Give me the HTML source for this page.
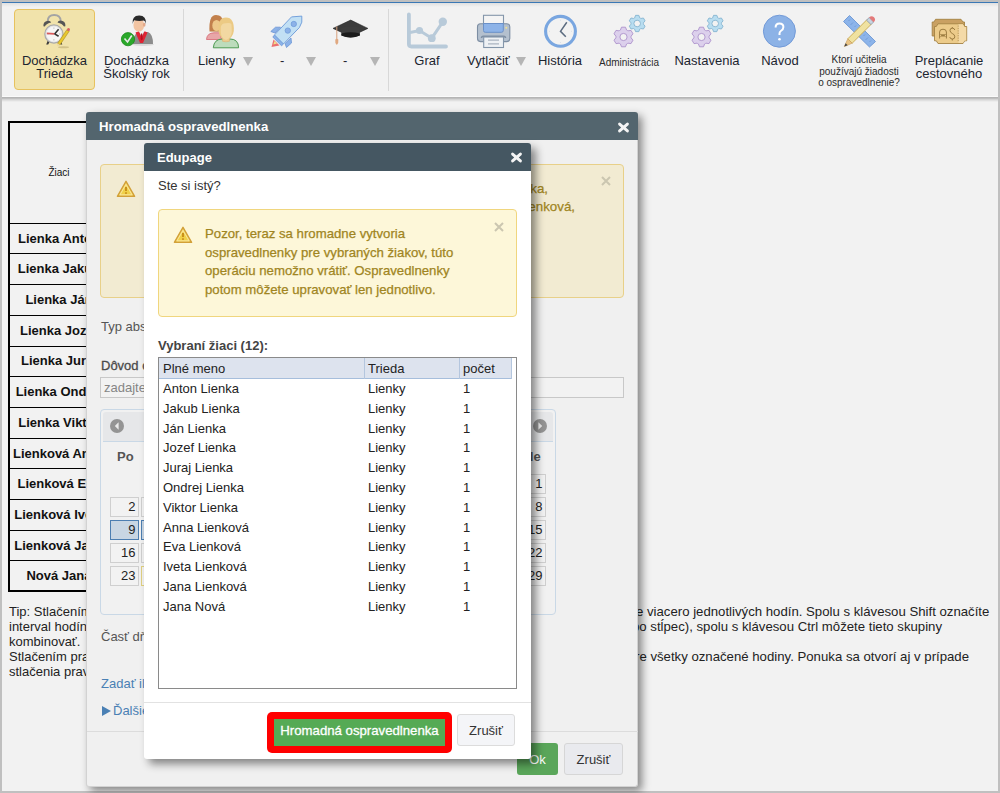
<!DOCTYPE html>
<html><head><meta charset="utf-8">
<style>
*{box-sizing:border-box}
html,body{margin:0;padding:0;width:1000px;height:793px;overflow:hidden;background:#c0c0c0;font-family:"Liberation Sans",sans-serif;font-size:13px;color:#222}
.a{position:absolute}
#page{position:absolute;left:2px;top:2px;width:996px;height:789px;background:#f2f2f2;overflow:hidden}
.sep{position:absolute;top:9px;width:1px;height:82px;background:#d8d8d8}
.lbl{position:absolute;text-align:center;white-space:nowrap;line-height:12.5px;color:#1c2530}
.arr{position:absolute;width:0;height:0;border-left:5px solid transparent;border-right:5px solid transparent;border-top:9px solid #b5b5b5}
.t{position:absolute;white-space:nowrap}
.row{position:absolute;left:10px;width:400px;height:1px;background:#000}
.nm{position:absolute;left:10px;width:98px;text-align:center;font-weight:bold;white-space:nowrap;line-height:16px;color:#111}
.cell{position:absolute;width:29px;height:20px;border:1px solid #cfcfcf;background:#f2f2f2;text-align:right;padding-right:2.5px;line-height:18px;font-size:13px;color:#222}
.lr{position:absolute;white-space:nowrap;line-height:16px;color:#222}
</style></head><body>
<div id="page"></div>
<!-- toolbar -->
<div class="a" style="left:2px;top:2px;width:996px;height:1px;background:#3b78b5"></div>
<div class="a" style="left:2px;top:96px;width:996px;height:1px;background:#fafafa"></div>
<div class="a" style="left:2px;top:97px;width:996px;height:5px;background:linear-gradient(#b2b2b2 0px,#bababa 1.2px,#d4d4d4 2.5px,#f2f2f2 5px)"></div>
<div class="a" style="left:2px;top:3px;width:996px;height:4px;background:linear-gradient(#e0e0e0,#f2f2f2)"></div>
<div class="a" style="left:14px;top:9px;width:81px;height:81px;background:#f1e3ab;border:1px solid #e7c25e;border-radius:4px"></div>
<div class="lbl" style="left:14px;top:55px;width:81px">Dochádzka<br>Trieda</div>
<div class="lbl" style="left:95.5px;top:55px;width:82px">Dochádzka<br>Školský rok</div>
<div class="sep" style="left:183px"></div>
<div class="lbl" style="left:198px;top:55px">Lienky</div>
<div class="arr" style="left:243px;top:57px"></div>
<div class="lbl" style="left:280px;top:55px">-</div>
<div class="arr" style="left:306px;top:57px"></div>
<div class="lbl" style="left:343px;top:55px">-</div>
<div class="arr" style="left:370px;top:57px"></div>
<div class="sep" style="left:388px"></div>
<div class="lbl" style="left:405px;top:55px;width:44px">Graf</div>
<div class="lbl" style="left:467px;top:55px">Vytlačiť</div>
<div class="arr" style="left:516px;top:57px"></div>
<div class="lbl" style="left:530px;top:55px;width:60px">História</div>
<div class="lbl" style="left:594px;top:57px;width:70px;font-size:10px;color:#2a2a2a">Administrácia</div>
<div class="lbl" style="left:667px;top:55px;width:80px">Nastavenia</div>
<div class="lbl" style="left:752px;top:55px;width:56px">Návod</div>
<div class="lbl" style="left:811px;top:54px;width:96px;font-size:10px;line-height:11.5px;color:#2a2a2a">Ktorí učitelia<br>používajú žiadosti<br>o ospravedlnenie?</div>
<div class="lbl" style="left:905px;top:55px;width:88px">Preplácanie<br>cestovného</div>

<!-- icons -->
<svg class="a" style="left:40px;top:12px" width="32" height="38" viewBox="0 0 32 38">
 <ellipse cx="23.5" cy="35.2" rx="5.5" ry="1" fill="#b8a870" opacity=".55"/>
 <path d="M7.7,9 Q8,3 14.2,3 Q20.4,3 20.8,9" fill="none" stroke="#a4a4a4" stroke-width="1.8"/>
 <path d="M3.4,14.2 Q3,9.2 8.5,8.8 Q10.5,9 11.2,10.6 Q6.5,11.5 4.8,14.5Z" fill="#555"/>
 <path d="M25.4,14.2 Q25.8,9 20.3,8.6 Q18.2,8.8 17.5,10.4 Q22.3,11.4 24,14.5Z" fill="#555"/>
 <path d="M7.8,28.5 L6.2,32.4 L8.2,32.6 L9.8,29.5Z" fill="#3a3a3a"/>
 <path d="M20.5,28.5 L22.3,32.4 L20.6,32.6 L18.7,29.5Z" fill="#3a3a3a"/>
 <circle cx="13.9" cy="22" r="9.1" fill="#e4e4e4" stroke="#aaa" stroke-width="1.2"/>
 <circle cx="13.9" cy="22" r="7.4" fill="#f6f6f6"/>
 <path d="M13.9,15.6 v1 M13.9,27.4 v1 M7.5,22 h1 M19.3,22 h1" stroke="#999" stroke-width=".8"/>
 <path d="M6.8,21.4 L14.5,21.8" stroke="#d85a5a" stroke-width="1.7"/>
 <path d="M14.6,21.9 L18.6,17.2 M14.6,21.9 L18.6,24.3" stroke="#333" stroke-width="1.6"/>
 <path d="M19.92,32.93 L29.16,19.29 L26.84,17.72 L17.6,31.36Z" fill="#e8c82e" stroke="#a88a1e" stroke-width=".6"/>
 <path d="M19.92,32.93 L17.6,31.36 L17.3,34.3Z" fill="#e8d4a0"/>
 <circle cx="28.5" cy="17.6" r="1.5" fill="#d86262"/>
</svg>
<svg class="a" style="left:118px;top:12px" width="40" height="36" viewBox="0 0 40 36">
 <ellipse cx="25" cy="32.5" rx="11" ry="1.5" fill="#ccc" opacity=".6"/>
 <path d="M15,32 Q15,22.5 20,20 L30,20 Q35,22 35,32Z" fill="#8c8c8c"/>
 <path d="M17.5,20.5 L21,19.3 L23.5,25.5 L26.5,19.3 L29.5,20.5 L25,31 L22,31Z" fill="#e02434"/>
 <path d="M21,19.3 L23.5,24.5 L26.3,19.3Z" fill="#f4f4f4"/>
 <path d="M23,21.5 L24.2,21.5 L24.8,27 L23.6,28.5 L22.6,27Z" fill="#b81020"/>
 <ellipse cx="20.8" cy="13" rx="5.4" ry="6.6" fill="#f2c4a2"/>
 <ellipse cx="26.2" cy="12.8" rx="1.3" ry="2" fill="#e2a88a"/>
 <path d="M14.6,12 Q13.8,3.5 21,3.5 Q28.5,3.3 28,12 Q27.2,9 25.8,8.6 Q20.5,9.6 16.2,8.2 Q15.2,9.5 14.6,12Z" fill="#2a2a2a"/>
 <circle cx="10" cy="27.2" r="6.6" fill="#2aa82a" stroke="#1a8a1a" stroke-width=".8"/>
 <path d="M6.5,26.5 L9.5,30 L13.8,23.5" fill="none" stroke="#e8e8e8" stroke-width="1.6"/>
</svg>
<svg class="a" style="left:200px;top:10px" width="50" height="42" viewBox="0 0 50 42">
 <path d="M6.5,29.5 Q7,23 14,22.8 L20,22.8 L21.5,29.5Z" fill="#e8a6a8" stroke="#d8707a" stroke-width=".9"/>
 <path d="M9.5,21.5 Q8.5,5 16,5 Q23,5 22.5,12 L21,21.7Z" fill="#c2804c"/>
 <ellipse cx="16.5" cy="15.5" rx="4.2" ry="5.5" fill="#eec88a"/>
 <path d="M13.3,37.8 Q14,29 22.5,29 L30,29 Q38.5,29 38.6,37.8Z" fill="#bcdcbc" stroke="#4e9a52" stroke-width="1"/>
 <path d="M22.5,27 L22.5,31.2 Q26,32.5 29.5,31.2 L29.5,27Z" fill="#eccc90" stroke="#d8b070" stroke-width=".6"/>
 <path d="M18.5,21 Q17.5,7.5 26,7.5 Q34.5,7.5 33.8,21 Q33,28 26,30.5 Q19.5,28 18.5,21Z" fill="#ecca84"/>
 <path d="M20.8,17 Q21.5,13 26,13.2 Q30.5,12.5 31.5,14.5 L31.8,22 Q31,28.5 26,30 Q21,28.5 20.8,22Z" fill="#f2d8a2"/>
</svg>
<svg class="a" style="left:265px;top:10px" width="45" height="42" viewBox="0 0 45 42">
 <path d="M6.5,37 L8.5,29.5 L14.5,35.5Z" fill="#ea7070"/>
 <path d="M8.3,34.5 L9.5,31 L12,33.5Z" fill="#f0e08a"/>
 <path d="M5.8,21.5 L10.5,17.2 L15.5,17.2 L10,23Z" fill="#8cb2e8" stroke="#6a94d4" stroke-width=".8"/>
 <path d="M20,33.5 L26,28 L26.5,33 L21.5,37.5Z" fill="#8cb2e8" stroke="#6a94d4" stroke-width=".8"/>
 <path d="M9.5,25 L18.5,34 L16.5,35.8 L7.8,27Z" fill="#8cb2e8" stroke="#6a94d4" stroke-width=".8"/>
 <path d="M26.5,6.9 L36.8,6.1 L36.8,12.2 L34.4,17.5 L18.5,33.9 L9.5,24.9Z" fill="#c2e0f4" stroke="#6a98d8" stroke-width=".9"/>
 <circle cx="28.8" cy="14" r="2.7" fill="#8cb2e8" stroke="#6a98d8" stroke-width=".7"/>
 <circle cx="22.8" cy="20.6" r="2.7" fill="#8cb2e8" stroke="#6a98d8" stroke-width=".7"/>
</svg>
<svg class="a" style="left:328px;top:12px" width="44" height="40" viewBox="0 0 44 40">
 <path d="M5,16.4 L22.7,8.1 L39.9,16.4 L22.7,24.5Z" fill="#3c3c3c" stroke="#222" stroke-width=".6"/>
 <path d="M13.4,15.5 Q22.6,13.5 31.8,15.5 L31.8,23.5 Q22.6,27.5 13.4,23.5Z" fill="#3e3e3e"/>
 <path d="M13.4,21.5 Q22.6,19 31.8,21.5 L31.8,23.5 Q22.6,27.5 13.4,23.5Z" fill="#1c1c1c"/>
 <path d="M8.8,14.5 L8.8,27" stroke="#d8a27e" stroke-width="1"/>
 <path d="M7.3,27.5 Q8.8,26 10.3,27.5 L10.2,31 L8.8,33 L7.4,31Z" fill="#e0a880"/>
</svg>
<svg class="a" style="left:403px;top:10px" width="48" height="42" viewBox="0 0 48 42">
 <path d="M5.9,4.5 L5.9,34 Q5.9,36.5 8.5,36.5 L43,36.5" fill="none" stroke="#b8cad9" stroke-width="3.8" stroke-linecap="round"/>
 <path d="M7,22.5 L16.5,20.5 L28.8,28.2 L39.8,11.8" fill="none" stroke="#b8cad9" stroke-width="3"/>
 <circle cx="16.5" cy="20.5" r="3.6" fill="#b8cad9"/>
 <circle cx="28.8" cy="28.2" r="3.9" fill="#b8cad9"/>
 <circle cx="39.8" cy="11.8" r="4.2" fill="#b8cad9"/>
</svg>
<svg class="a" style="left:472px;top:10px" width="44" height="42" viewBox="0 0 44 42">
 <rect x="11.5" y="5.3" width="20" height="9" fill="#f4f4f4" stroke="#8496aa" stroke-width="1.1"/>
 <rect x="5.5" y="13.8" width="32.3" height="17.8" rx="3" fill="#b4c0ce" stroke="#7d8ea3" stroke-width="1.1"/>
 <path d="M11.5,13.5 L31.3,13.5 L31.3,20.5 Q31.3,22.3 29.5,22.3 L13.3,22.3 Q11.5,22.3 11.5,20.5Z" fill="#8db3e8" stroke="#6a90c8" stroke-width="1"/>
 <circle cx="34.3" cy="17.8" r="1" fill="#f0e090"/>
 <path d="M9.5,28 Q9.5,26.2 11.5,26.2 L31.5,26.2 Q33.5,26.2 33.5,28" fill="none" stroke="#7d8ea3" stroke-width="1.5"/>
 <rect x="11.7" y="27" width="19.8" height="10.5" fill="#eef1f4" stroke="#8496aa" stroke-width="1.1"/>
 <path d="M16,30.2 L27,30.2 M16,33.8 L27,33.8" stroke="#aab4c0" stroke-width="1.2"/>
</svg>
<svg class="a" style="left:538px;top:10px" width="44" height="42" viewBox="0 0 44 42">
 <circle cx="22.5" cy="21.3" r="14.9" fill="#f2f2f2" stroke="#79a6e0" stroke-width="3.1"/>
 <path d="M28.8,12.3 L22.5,21.3 L27.8,26.8" fill="none" stroke="#5c6c80" stroke-width="1.5"/>
 <path d="M22.5,9.8 v.8 M22.5,32 v.8 M11,21.3 h.8 M33.2,21.3 h.8" stroke="#d4dce8" stroke-width="1"/>
</svg>
<svg class="a" style="left:605px;top:10px" width="45" height="42" viewBox="0 0 45 42">
 <path fill-rule="evenodd" fill="#b8ddf0" stroke="#86b4d0" stroke-width=".9" d="M29.67,7.84 L30.55,5.37 L33.85,5.37 L34.73,7.84 L35.30,8.13 L35.84,8.48 L38.42,8.00 L40.07,10.86 L38.37,12.86 L38.40,13.50 L38.37,14.14 L40.07,16.14 L38.42,19.00 L35.84,18.52 L35.30,18.87 L34.73,19.16 L33.85,21.63 L30.55,21.63 L29.67,19.16 L29.10,18.87 L28.56,18.52 L25.98,19.00 L24.33,16.14 L26.03,14.14 L26.00,13.50 L26.03,12.86 L24.33,10.86 L25.98,8.00 L28.56,8.48 L29.10,8.13Z M35.50,13.50 A3.3,3.3 0 1 0 28.90,13.50 A3.3,3.3 0 1 0 35.50,13.50Z"/>
 <path fill-rule="evenodd" fill="#dcd0ec" stroke="#ad92cc" stroke-width=".9" d="M15.40,20.06 L16.51,17.20 L20.49,17.20 L21.60,20.06 L22.30,20.42 L22.96,20.85 L25.99,20.38 L27.98,23.82 L26.06,26.21 L26.10,27.00 L26.06,27.79 L27.98,30.18 L25.99,33.62 L22.96,33.15 L22.30,33.58 L21.60,33.94 L20.49,36.80 L16.51,36.80 L15.40,33.94 L14.70,33.58 L14.04,33.15 L11.01,33.62 L9.02,30.18 L10.94,27.79 L10.90,27.00 L10.94,26.21 L9.02,23.82 L11.01,20.38 L14.04,20.85 L14.70,20.42Z M22.10,27.00 A3.6,3.6 0 1 0 14.90,27.00 A3.6,3.6 0 1 0 22.10,27.00Z"/>
</svg>
<svg class="a" style="left:683px;top:10px" width="45" height="42" viewBox="0 0 45 42">
 <path fill-rule="evenodd" fill="#b8ddf0" stroke="#86b4d0" stroke-width=".9" d="M29.67,7.84 L30.55,5.37 L33.85,5.37 L34.73,7.84 L35.30,8.13 L35.84,8.48 L38.42,8.00 L40.07,10.86 L38.37,12.86 L38.40,13.50 L38.37,14.14 L40.07,16.14 L38.42,19.00 L35.84,18.52 L35.30,18.87 L34.73,19.16 L33.85,21.63 L30.55,21.63 L29.67,19.16 L29.10,18.87 L28.56,18.52 L25.98,19.00 L24.33,16.14 L26.03,14.14 L26.00,13.50 L26.03,12.86 L24.33,10.86 L25.98,8.00 L28.56,8.48 L29.10,8.13Z M35.50,13.50 A3.3,3.3 0 1 0 28.90,13.50 A3.3,3.3 0 1 0 35.50,13.50Z"/>
 <path fill-rule="evenodd" fill="#dcd0ec" stroke="#ad92cc" stroke-width=".9" d="M15.40,20.06 L16.51,17.20 L20.49,17.20 L21.60,20.06 L22.30,20.42 L22.96,20.85 L25.99,20.38 L27.98,23.82 L26.06,26.21 L26.10,27.00 L26.06,27.79 L27.98,30.18 L25.99,33.62 L22.96,33.15 L22.30,33.58 L21.60,33.94 L20.49,36.80 L16.51,36.80 L15.40,33.94 L14.70,33.58 L14.04,33.15 L11.01,33.62 L9.02,30.18 L10.94,27.79 L10.90,27.00 L10.94,26.21 L9.02,23.82 L11.01,20.38 L14.04,20.85 L14.70,20.42Z M22.10,27.00 A3.6,3.6 0 1 0 14.90,27.00 A3.6,3.6 0 1 0 22.10,27.00Z"/>
</svg>
<svg class="a" style="left:758px;top:10px" width="44" height="42" viewBox="0 0 44 42">
 <circle cx="21.4" cy="21.2" r="16" fill="#8cb2e6" stroke="#729ad8" stroke-width="1"/>
 <path d="M17.6,17.4 Q17.6,13.4 21.5,13.4 Q25.4,13.4 25.4,17 Q25.4,19.5 22.8,21 Q21.5,21.8 21.5,23.5 L21.5,25" fill="none" stroke="#fff" stroke-width="2"/>
 <circle cx="21.5" cy="29.2" r="1.3" fill="#fff"/>
</svg>
<svg class="a" style="left:838px;top:10px" width="44" height="42" viewBox="0 0 44 42">
 <path d="M11.5,5.5 L37.5,31.5 L31.5,37 L5.5,11.5Z" fill="#8cb4ea" stroke="#6c96d2" stroke-width=".9"/>
 <path d="M12,9.5 l-1.5,1.5 M15,12.5 l-2.5,2.5 M18,15.5 l-1.5,1.5 M27,24.5 l-1.5,1.5 M30,27.5 l-2.5,2.5 M33,30.5 l-1.5,1.5" stroke="#6c96d2" stroke-width=".8"/>
 <path d="M9.8,28.8 L29,9.6 L33.5,14 L14.2,33.2Z" fill="#f0e2a0" stroke="#c8a850" stroke-width=".9"/>
 <path d="M28.5,10.2 L31.2,7.5 L35.6,12 L33,14.6Z" fill="#c8d4e0" stroke="#8896a8" stroke-width=".8"/>
 <path d="M31,7.6 Q33.5,5 36,7.3 Q38.3,9.8 35.7,12.2Z" fill="#e47a7a"/>
 <path d="M9.8,28.8 L14.2,33.2 L6.3,36.6Z" fill="#eac484" stroke="#c8a060" stroke-width=".6"/>
 <path d="M7.6,33.3 L9.6,35.3 L6.3,36.6Z" fill="#444"/>
</svg>
<svg class="a" style="left:926px;top:10px" width="46" height="42" viewBox="0 0 46 42">
 <path d="M9.5,9.3 L35,9.3 L37,12 L38.5,12 L38.5,26 L6.2,26 L6.2,12 L8,12Z" fill="#c9a062" stroke="#a48244" stroke-width=".9"/>
 <path d="M12,13.8 L37,13.8 L38.7,16.5 L40.7,16.5 L40.7,30.8 L38.7,30.8 L37,33.5 L12,33.5 L10.3,30.8 L8.5,30.8 L8.5,16.5 L10.3,16.5Z" fill="#eccb8a" stroke="#a48244" stroke-width=".9"/>
 <path d="M32.5,14.3 L37,14.3 L38.5,16.9 L40.2,16.9 L40.2,30.4 L38.5,30.4 L37,33 L32.5,33Z" fill="#f4daa8"/>
 <path d="M32.2,15.5 L32.2,32" stroke="#a48244" stroke-width=".7" stroke-dasharray="1.2,1.2"/>
 <path d="M13.6,28.5 L13.6,22 Q13.6,19.2 17,19.2 Q20.4,19.2 20.4,22 L20.4,28.5" fill="none" stroke="#9c7c40" stroke-width="1"/>
 <rect x="13.6" y="24.3" width="6.8" height="2.2" fill="#9c7c40"/><circle cx="14.6" cy="25.4" r=".6" fill="#eccb8a"/><circle cx="19.4" cy="25.4" r=".6" fill="#eccb8a"/>
 <path d="M28.8,20 Q28.5,18.2 26.3,18.2 Q24,18.2 24,20.3 Q24,22.5 26.3,23.5 Q28.8,24.5 28.8,26.8 Q28.8,29 26.3,29 Q24,29 23.8,27 M26.3,17 v1.2 M26.3,29 v1.5" fill="none" stroke="#9c7c40" stroke-width="1"/>
</svg>

<!-- left table -->
<div class="a" style="left:8px;top:121px;width:420px;height:471px;border:2px solid #000"></div>
<div class="t" style="left:10px;top:167px;width:98px;text-align:center;font-size:10px;color:#111">Žiaci</div>
<div class="row" style="top:223px"></div>
<div class="row" style="top:253px"></div>
<div class="row" style="top:284px"></div>
<div class="row" style="top:315px"></div>
<div class="row" style="top:346px"></div>
<div class="row" style="top:376px"></div>
<div class="row" style="top:407px"></div>
<div class="row" style="top:438px"></div>
<div class="row" style="top:468px"></div>
<div class="row" style="top:499px"></div>
<div class="row" style="top:530px"></div>
<div class="row" style="top:560px"></div>
<div class="nm" style="top:231px">Lienka Anton</div>
<div class="nm" style="top:261px">Lienka Jakub</div>
<div class="nm" style="top:292px">Lienka Ján</div>
<div class="nm" style="top:323px">Lienka Jozef</div>
<div class="nm" style="top:353px">Lienka Juraj</div>
<div class="nm" style="top:384px">Lienka Ondrej</div>
<div class="nm" style="top:415px">Lienka Viktor</div>
<div class="nm" style="top:446px">Lienková Anna</div>
<div class="nm" style="top:476px">Lienková Eva</div>
<div class="nm" style="top:507px">Lienková Iveta</div>
<div class="nm" style="top:538px">Lienková Jana</div>
<div class="nm" style="top:568px">Nová Jana</div>

<!-- tip -->
<div class="t" style="left:9px;top:604px;line-height:15px">Tip: Stlačením ľavého<br>interval hodín. Kliknutím<br>kombinovať.<br>Stlačením pravého<br>stlačenia pravého</div>
<div class="t" style="left:636px;top:604px;line-height:15px;font-size:13.2px">e viacero jednotlivých hodín. Spolu s klávesou Shift označíte</div>
<div class="t" style="left:632px;top:619px;line-height:15px;font-size:13.2px">po stĺpec), spolu s klávesou Ctrl môžete tieto skupiny</div>
<div class="t" style="left:635px;top:649px;line-height:15px;font-size:13.2px">re všetky označené hodiny. Ponuka sa otvorí aj v prípade</div>

<!-- outer dialog -->
<div class="a" style="left:86px;top:112px;width:552px;height:675px;background:#f0f0f0;border-radius:3px;box-shadow:4px 4px 8px rgba(0,0,0,.45);border:1px solid #d2d2d2;border-top:0"></div>
<div class="a" style="left:86px;top:112px;width:552px;height:28px;background:#53656e;border-radius:3px 3px 0 0"></div>
<div class="t" style="left:99px;top:119px;font-size:13.2px;font-weight:bold;color:#fff;line-height:16px">Hromadná ospravedlnenka</div>
<svg class="a" style="left:617px;top:120.5px" width="13" height="13"><path d="M2.6,3.1 L10.4,9.9 M10.4,3.1 L2.6,9.9" stroke="#f4f4f4" stroke-width="3" stroke-linecap="round"/></svg>
<div class="a" style="left:100px;top:164px;width:524px;height:134px;background:#f2ebd2;border:1px solid #e8d089;border-radius:4px"></div>
<svg class="a" style="left:116px;top:180px" width="20" height="18" viewBox="0 0 20 18"><path d="M10,1.3 L18.6,16.3 L1.4,16.3Z" fill="#f3d868" stroke="#d2a038" stroke-width="1.4" stroke-linejoin="round"/><path d="M10,4.5 L16,14.8 L4,14.8Z" fill="#f0d048" stroke="#fbeaa8" stroke-width=".8" stroke-linejoin="round"/><path d="M10,7 L10,11" stroke="#c08010" stroke-width="1.6"/><rect x="9.2" y="12.3" width="1.6" height="1.5" fill="#c08010"/></svg>
<div class="t" style="left:348px;top:180px;width:200px;text-align:right;font-size:13.33px;color:#a08522;-webkit-text-stroke:.25px #a08522;line-height:18.5px">Lienka,</div><div class="t" style="left:375px;top:198px;width:200px;text-align:right;font-size:13.33px;color:#a08522;-webkit-text-stroke:.25px #a08522;line-height:18.5px">Lienková,</div>
<svg class="a" style="left:600px;top:175px" width="12" height="12"><path d="M2,2 L10,10 M10,2 L2,10" stroke="#cbc6b0" stroke-width="2"/></svg>
<div class="t" style="left:101px;top:319px;color:#555;line-height:16px">Typ absencie</div>
<div class="t" style="left:101px;top:358px;color:#4a4a4a;-webkit-text-stroke:.3px #4a4a4a;line-height:16px">Dôvod ospravedlnenia</div>
<div class="a" style="left:100px;top:377px;width:524px;height:21px;background:#f2f2f2;border:1px solid #c8c8c8"></div>
<div class="t" style="left:104px;top:380px;color:#858585;line-height:16px">zadajte dôvod</div>
<div class="a" style="left:100px;top:409px;width:456px;height:206px;border:1px solid #c9d8e6;border-radius:4px;background:#f1f1f1"></div>
<div class="a" style="left:103px;top:412px;width:450px;height:30px;background:#e6e7e9;border-bottom:1px solid #c9d8e6;border-radius:3px 3px 0 0"></div>
<svg class="a" style="left:109px;top:418px" width="16" height="16"><circle cx="8" cy="8" r="7" fill="#949494"/><path d="M9.6,4.3 L5.8,8 L9.6,11.7Z" fill="#eaeaea"/></svg><svg class="a" style="left:531.5px;top:418px" width="16" height="16"><circle cx="8" cy="8" r="7" fill="#949494"/><path d="M6.4,4.3 L10.2,8 L6.4,11.7Z" fill="#eaeaea"/></svg>
<div class="t" style="left:117px;top:449px;color:#555;font-weight:bold;line-height:16px">Po</div>
<div class="t" style="left:524px;top:449px;color:#555;font-weight:bold;line-height:16px">Ne</div>
<div class="cell" style="left:110px;top:497px">2</div>
<div class="cell" style="left:110px;top:520px;background:#c9d6e3;border-color:#4d7eb1">9</div>
<div class="cell" style="left:110px;top:543px">16</div>
<div class="cell" style="left:110px;top:566px">23</div>
<div class="cell" style="left:141px;top:497px"></div>
<div class="cell" style="left:141px;top:520px;background:#c9d6e3;border-color:#4d7eb1"></div>
<div class="cell" style="left:141px;top:543px"></div>
<div class="cell" style="left:141px;top:566px;border-color:#e0d080"></div>
<div class="cell" style="left:517px;top:474px">1</div>
<div class="cell" style="left:517px;top:497px">8</div>
<div class="cell" style="left:517px;top:520px">15</div>
<div class="cell" style="left:517px;top:543px">22</div>
<div class="cell" style="left:517px;top:566px">29</div>
<div class="t" style="left:101px;top:629px;color:#555;line-height:16px">Časť dňa</div>
<div class="t" style="left:101px;top:676px;color:#4a80b4;line-height:16px">Zadať ilosť</div>
<div class="a" style="left:102px;top:706px;width:0;height:0;border-top:5px solid transparent;border-bottom:5px solid transparent;border-left:9px solid #4a80b4"></div><div class="t" style="left:113px;top:703px;color:#4a80b4;line-height:16px">Ďalšie</div>
<div class="a" style="left:87px;top:731px;width:551px;height:1px;background:#dcdcdc"></div>
<div class="a" style="left:517px;top:743px;width:41px;height:32px;background:#5aa65a;border-radius:3px"></div>
<div class="t" style="left:517px;top:752px;width:41px;text-align:center;color:#fff;line-height:16px">Ok</div>
<div class="a" style="left:564px;top:743px;width:59px;height:32px;background:#e9eaee;border:1px solid #d6d6d6;border-radius:3px"></div>
<div class="t" style="left:564px;top:752px;width:59px;text-align:center;color:#333;line-height:16px">Zrušiť</div>

<!-- inner dialog -->
<div class="a" style="left:144px;top:143px;width:387px;height:616px;background:#fff;border-radius:3px;box-shadow:5px 5px 8px rgba(0,0,0,.45)"></div>
<div class="a" style="left:144px;top:143px;width:387px;height:28px;background:#455762;border-radius:3px 3px 0 0"></div>
<div class="t" style="left:157px;top:150px;font-size:13px;font-weight:bold;color:#fff;line-height:16px">Edupage</div>
<svg class="a" style="left:510px;top:151px" width="13" height="13"><path d="M2.6,3.1 L10.4,9.9 M10.4,3.1 L2.6,9.9" stroke="#f4f4f4" stroke-width="3" stroke-linecap="round"/></svg>
<div class="t" style="left:158px;top:178px;color:#333;line-height:16px">Ste si istý?</div>
<div class="a" style="left:158px;top:209px;width:359px;height:108px;background:#fdf7d9;border:1px solid #f0d67e;border-radius:4px"></div>
<svg class="a" style="left:173px;top:226px" width="20" height="18" viewBox="0 0 20 18"><path d="M10,1.3 L18.6,16.3 L1.4,16.3Z" fill="#f3d868" stroke="#d2a038" stroke-width="1.4" stroke-linejoin="round"/><path d="M10,4.5 L16,14.8 L4,14.8Z" fill="#f0d048" stroke="#fbeaa8" stroke-width=".8" stroke-linejoin="round"/><path d="M10,7 L10,11" stroke="#c08010" stroke-width="1.6"/><rect x="9.2" y="12.3" width="1.6" height="1.5" fill="#c08010"/></svg>
<svg class="a" style="left:492.5px;top:220.5px" width="12" height="12"><path d="M2,2 L10,10 M10,2 L2,10" stroke="#cbc6b0" stroke-width="2"/></svg>
<div class="t" style="left:205px;top:225px;color:#a08522;-webkit-text-stroke:.25px #a08522;font-size:13.2px;line-height:18.6px">Pozor, teraz sa hromadne vytvoria<br>ospravedlnenky pre vybraných žiakov, túto<br>operáciu nemožno vrátiť. Ospravedlnenky<br>potom môžete upravovať len jednotlivo.</div>
<div class="t" style="left:158px;top:338px;color:#444;font-weight:bold;line-height:16px">Vybraní žiaci (12):</div>
<div class="a" style="left:158px;top:357px;width:359px;height:332px;border:1px solid #8a8a8a;background:#fff"></div>
<div class="a" style="left:159px;top:358px;width:353px;height:21px;background:#dde3ee;border-bottom:1px solid #a6bedc"></div>
<div class="a" style="left:364px;top:358px;width:1px;height:21px;background:#b4c6de"></div>
<div class="a" style="left:459px;top:358px;width:1px;height:21px;background:#b4c6de"></div>
<div class="a" style="left:511px;top:358px;width:1px;height:21px;background:#b4c6de"></div>
<div class="lr" style="left:163px;top:361px">Plné meno</div>
<div class="lr" style="left:368px;top:361px">Trieda</div>
<div class="lr" style="left:463px;top:361px">počet</div>
<div class="lr" style="left:163px;top:381.0px">Anton Lienka</div><div class="lr" style="left:368px;top:381.0px">Lienky</div><div class="lr" style="left:463px;top:381.0px">1</div>
<div class="lr" style="left:163px;top:400.8px">Jakub Lienka</div><div class="lr" style="left:368px;top:400.8px">Lienky</div><div class="lr" style="left:463px;top:400.8px">1</div>
<div class="lr" style="left:163px;top:420.6px">Ján Lienka</div><div class="lr" style="left:368px;top:420.6px">Lienky</div><div class="lr" style="left:463px;top:420.6px">1</div>
<div class="lr" style="left:163px;top:440.4px">Jozef Lienka</div><div class="lr" style="left:368px;top:440.4px">Lienky</div><div class="lr" style="left:463px;top:440.4px">1</div>
<div class="lr" style="left:163px;top:460.2px">Juraj Lienka</div><div class="lr" style="left:368px;top:460.2px">Lienky</div><div class="lr" style="left:463px;top:460.2px">1</div>
<div class="lr" style="left:163px;top:480.0px">Ondrej Lienka</div><div class="lr" style="left:368px;top:480.0px">Lienky</div><div class="lr" style="left:463px;top:480.0px">1</div>
<div class="lr" style="left:163px;top:499.8px">Viktor Lienka</div><div class="lr" style="left:368px;top:499.8px">Lienky</div><div class="lr" style="left:463px;top:499.8px">1</div>
<div class="lr" style="left:163px;top:519.6px">Anna Lienková</div><div class="lr" style="left:368px;top:519.6px">Lienky</div><div class="lr" style="left:463px;top:519.6px">1</div>
<div class="lr" style="left:163px;top:539.4px">Eva Lienková</div><div class="lr" style="left:368px;top:539.4px">Lienky</div><div class="lr" style="left:463px;top:539.4px">1</div>
<div class="lr" style="left:163px;top:559.2px">Iveta Lienková</div><div class="lr" style="left:368px;top:559.2px">Lienky</div><div class="lr" style="left:463px;top:559.2px">1</div>
<div class="lr" style="left:163px;top:579.0px">Jana Lienková</div><div class="lr" style="left:368px;top:579.0px">Lienky</div><div class="lr" style="left:463px;top:579.0px">1</div>
<div class="lr" style="left:163px;top:598.8px">Jana Nová</div><div class="lr" style="left:368px;top:598.8px">Lienky</div><div class="lr" style="left:463px;top:598.8px">1</div>

<div class="a" style="left:144px;top:702px;width:387px;height:1px;background:#e2e2e2"></div>
<div class="a" style="left:267px;top:712px;width:185px;height:41px;background:#f00;border-radius:5px"></div>
<div class="a" style="left:274px;top:719px;width:171px;height:27px;background:#55aa55"></div>
<div class="t" style="left:274px;top:723px;width:171px;text-align:center;color:#fff;-webkit-text-stroke:.3px #fff;font-size:13.2px;line-height:16px">Hromadná ospravedlnenka</div>
<div class="a" style="left:457px;top:714px;width:58px;height:32px;background:#f4f5f8;border:1px solid #dcdcdc;border-radius:3px"></div>
<div class="t" style="left:457px;top:723px;width:58px;text-align:center;color:#333;line-height:16px">Zrušiť</div>
</body></html>
